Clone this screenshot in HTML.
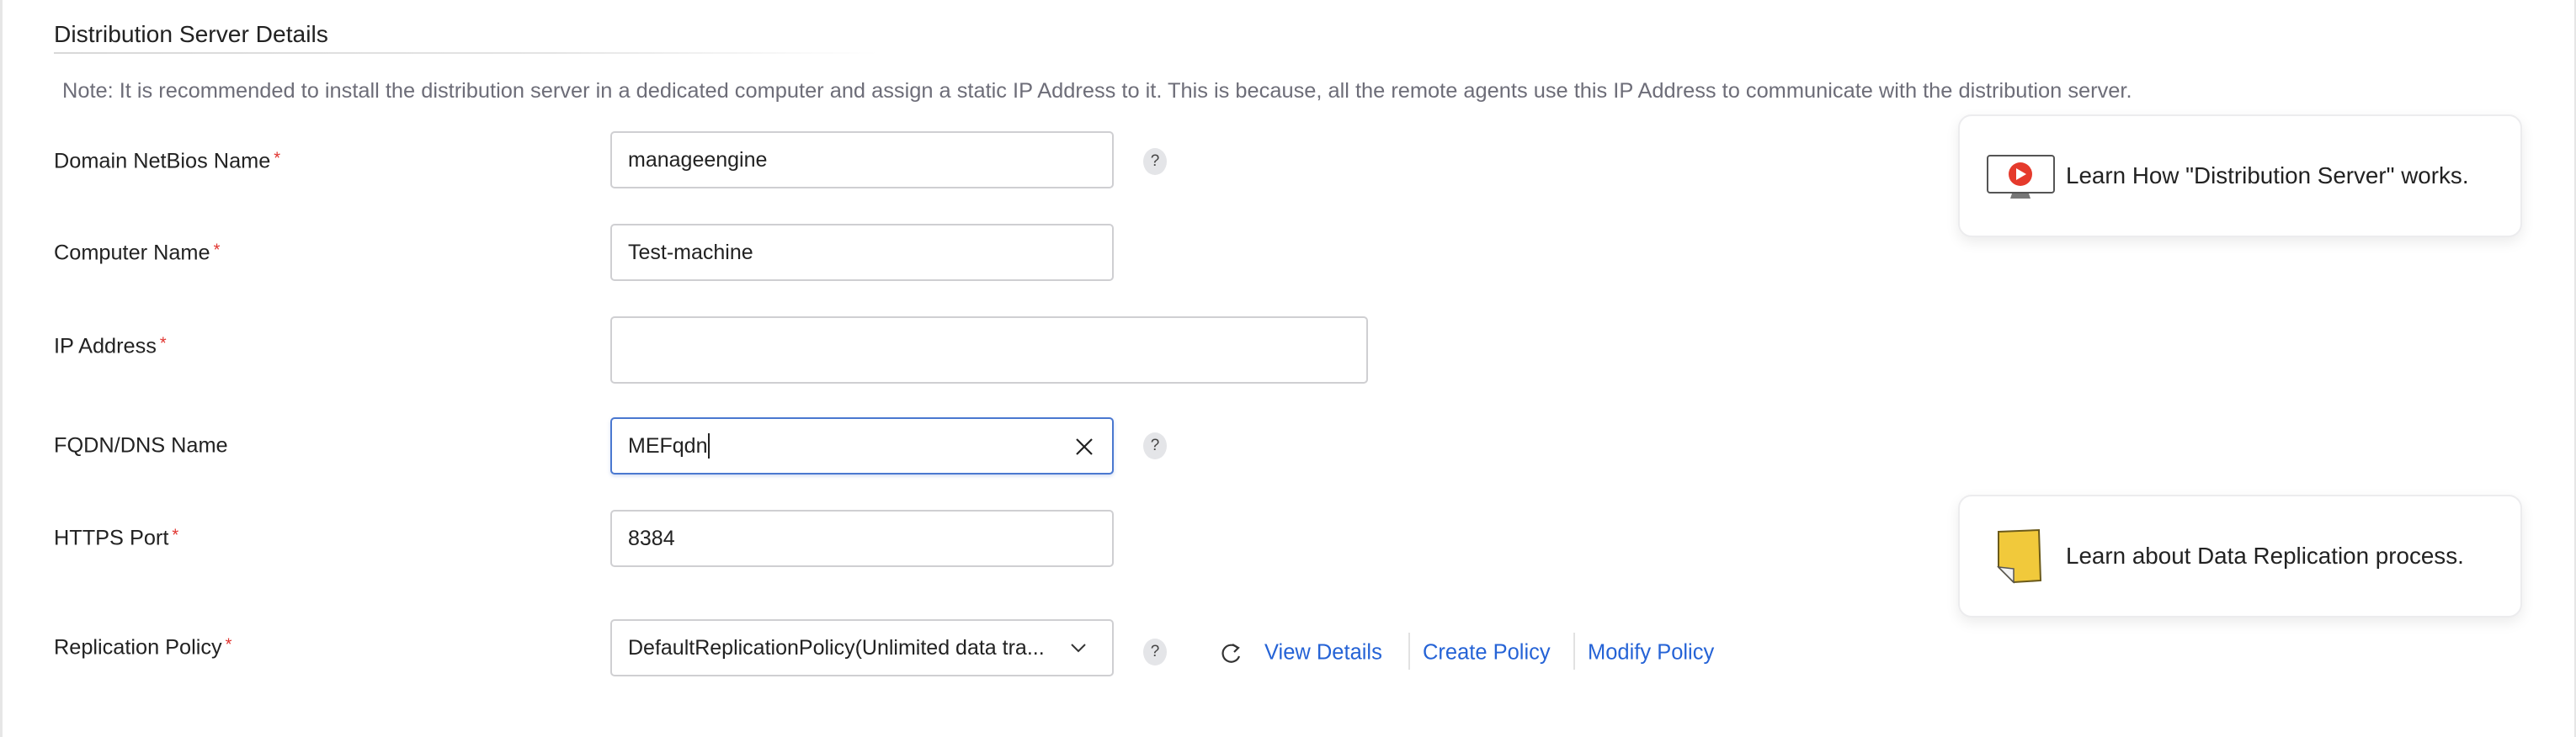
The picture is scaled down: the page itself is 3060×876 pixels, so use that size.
<!DOCTYPE html>
<html><head><meta charset="utf-8"><style>
*{margin:0;padding:0;box-sizing:border-box}
body{width:3060px;height:876px;background:#fff;font-family:"Liberation Sans",sans-serif;color:#222;position:relative;overflow:hidden}
.a{position:absolute}
.lbl{position:absolute;left:64px;font-size:25.3px;color:#222;transform:translateY(-50%)}
.lbl b{color:#e0332e;font-weight:normal;font-size:20px;vertical-align:top;margin-left:4px}
.inp{position:absolute;border:2px solid #cfcfd2;border-radius:5px;background:#fff;font-size:25px;padding-left:19px;display:flex;align-items:center;color:#222}
.q{position:absolute;width:28px;height:32px;border-radius:50%;background:#e4e5e8;font-size:19px;color:#444;display:flex;align-items:center;justify-content:center;transform:translate(-50%,-50%)}
.lnk{position:absolute;font-size:25.5px;color:#2563d6;transform:translateY(-50%)}
.sep{position:absolute;width:2px;height:44px;background:#e2e2e2;top:752px}
.card{position:absolute;left:2326px;width:670px;height:146px;border:2px solid #ececee;border-radius:16px;background:#fff;box-shadow:0 6px 16px rgba(0,0,0,.08)}
.ct{position:absolute;left:126px;top:50%;transform:translateY(-50%);font-size:27.8px;color:#222;white-space:nowrap}
</style></head><body>
<div class="a" style="left:0;top:0;width:3px;height:876px;background:#e6e6e6"></div>
<div class="a" style="right:0;top:0;width:2px;height:876px;background:#e6e6e6"></div>
<div class="a" style="left:64px;top:24px;font-size:28.2px;color:#222">Distribution Server Details</div>
<div class="a" style="left:64px;top:62px;width:980px;height:2px;background:linear-gradient(90deg,#d8d8d8,#e4e4e4 60%,#fff)"></div>
<div class="a" style="left:74px;top:94px;font-size:25.4px;color:#6d6d78;white-space:nowrap">Note: It is recommended to install the distribution server in a dedicated computer and assign a static IP Address to it. This is because, all the remote agents use this IP Address to communicate with the distribution server.</div>

<div class="lbl" style="top:192px">Domain NetBios Name<b>*</b></div>
<div class="inp" style="left:725px;top:156px;width:598px;height:68px">manageengine</div>
<div class="q" style="left:1372px;top:192px">?</div>

<div class="lbl" style="top:301px">Computer Name<b>*</b></div>
<div class="inp" style="left:725px;top:266px;width:598px;height:68px">Test-machine</div>

<div class="lbl" style="top:412px">IP Address<b>*</b></div>
<div class="inp" style="left:725px;top:376px;width:900px;height:80px"></div>

<div class="lbl" style="top:530px">FQDN/DNS Name</div>
<div class="inp" style="left:725px;top:496px;width:598px;height:68px;border-color:#4a78d0;box-shadow:0 2px 4px rgba(74,120,208,.25)">MEFqdn<span style="display:inline-block;width:2px;height:30px;background:#222;margin-left:1px"></span>
<svg style="position:absolute;right:22px;top:22px" width="22" height="22" viewBox="0 0 22 22"><path d="M2 2L20 20M20 2L2 20" stroke="#222" stroke-width="2.2"/></svg></div>
<div class="q" style="left:1372px;top:530px">?</div>

<div class="lbl" style="top:640px">HTTPS Port<b>*</b></div>
<div class="inp" style="left:725px;top:606px;width:598px;height:68px">8384</div>

<div class="lbl" style="top:770px">Replication Policy<b>*</b></div>
<div class="inp" style="left:725px;top:736px;width:598px;height:68px;font-size:25px;white-space:nowrap">DefaultReplicationPolicy(Unlimited data tra...
<svg style="position:absolute;right:30px;top:26px" width="20" height="12" viewBox="0 0 20 12"><path d="M2 2L10 10L18 2" fill="none" stroke="#333" stroke-width="2"/></svg></div>
<div class="q" style="left:1372px;top:775px">?</div>
<svg class="a" style="left:1450px;top:762px" width="26" height="28" viewBox="0 0 26 28"><path d="M20 8A10 10 0 1 0 22 18" fill="none" stroke="#333" stroke-width="2.2"/><path d="M14 4L21 8L16 13" fill="none" stroke="#333" stroke-width="2.2"/></svg>
<div class="lnk" style="left:1502px;top:776px">View Details</div>
<div class="sep" style="left:1673px"></div>
<div class="lnk" style="left:1690px;top:776px">Create Policy</div>
<div class="sep" style="left:1869px"></div>
<div class="lnk" style="left:1886px;top:776px">Modify Policy</div>

<div class="card" style="top:136px">
<svg class="a" style="left:32px;top:46px" width="82" height="52" viewBox="0 0 82 52"><rect x="1" y="1" width="79" height="44" rx="3" fill="#fff" stroke="#555" stroke-width="2"/><circle cx="40" cy="23" r="14" fill="#e53a2c"/><path d="M35 16L47 23L35 30Z" fill="#fff"/><path d="M30 46H50L52 52H28Z" fill="#777"/></svg>
<div class="ct">Learn How "Distribution Server" works.</div></div>

<div class="card" style="top:588px">
<svg class="a" style="left:44px;top:38px" width="54" height="66" viewBox="0 0 54 66"><path d="M2 4L50 2L52 62L20 64L2 46Z" fill="#f1c93b" stroke="#6b5a1a" stroke-width="2"/><path d="M2 46L20 48L20 64Z" fill="#f4f4f4" stroke="#555" stroke-width="1.5"/></svg>
<div class="ct">Learn about Data Replication process.</div></div>
</body></html>
